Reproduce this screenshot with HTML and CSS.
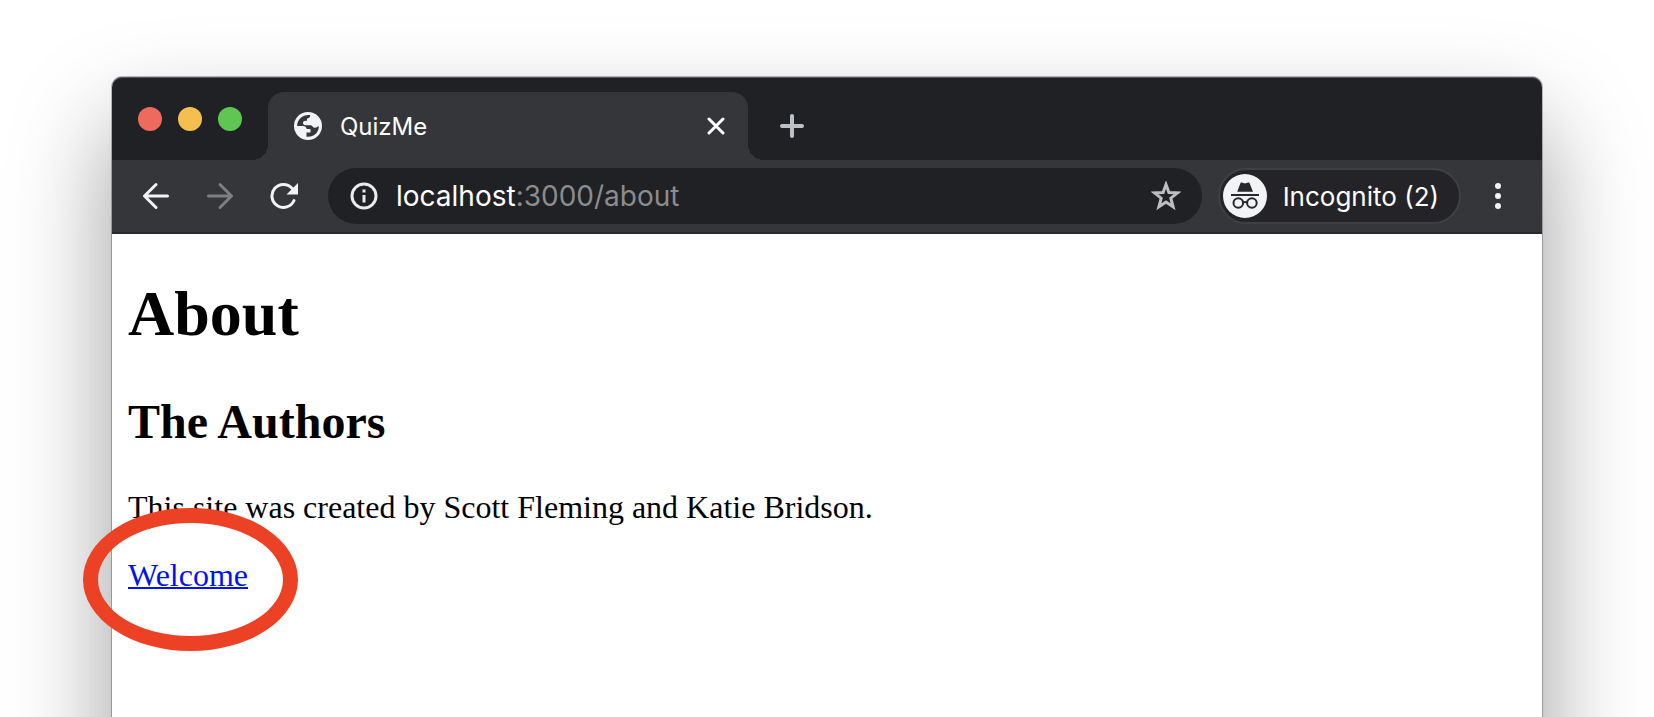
FILE: index.html
```html
<!DOCTYPE html>
<html lang="en">
<head>
<meta charset="utf-8">
<title>QuizMe</title>
<link rel="stylesheet" href="styles.css">
</head>
<body>
<div class="window">
  <header class="tabstrip">
    <div class="lights">
      <button class="light light-close" aria-label="Close window"></button>
      <button class="light light-min" aria-label="Minimize window"></button>
      <button class="light light-max" aria-label="Zoom window"></button>
    </div>
    <div class="tab">
      <svg class="globe" viewBox="0 0 28 28" aria-hidden="true">
        <circle cx="14" cy="14" r="14" fill="#f1f3f4"/>
        <path d="M16.300 3.200C9.500 2.200 3.200 7 3.100 14H9C11 14 12.300 15 12.700 17H16.500V20.500H12.500V24.700C19.500 25.500 25 20.500 24.800 14.200C23.500 14.200 23 15.800 21 15.800C18.500 15.800 18.500 13.300 16.500 13.300H11.500C10.300 13.300 9 12.300 9 11C9 9.500 10 8.800 11.500 8.800H13V6.500C14.500 6.500 16.300 5.500 16.300 3.200Z" fill="#35363a"/>
      </svg>
      <span class="tab-title">QuizMe</span>
      <button class="icon-button" aria-label="Close tab">
        <svg width="18" height="18" viewBox="0 0 18 18"><path d="M2 2L16 16M16 2L2 16" stroke="#fff" stroke-width="3" stroke-linecap="round"/></svg>
      </button>
    </div>
    <button class="icon-button new-tab" aria-label="New tab">
      <svg width="24" height="24" viewBox="0 0 24 24"><path d="M12 2V22M2 12H22" stroke="#bdc1c6" stroke-width="4" stroke-linecap="round"/></svg>
    </button>
  </header>

  <nav class="toolbar">
    <div class="nav-buttons">
      <button class="icon-button" aria-label="Back">
        <svg width="28" height="28" viewBox="0 0 28 28" fill="none" stroke="#f1f3f4" stroke-width="3" stroke-linecap="round" stroke-linejoin="round"><path d="M25.500 14H2.500M14 2.500L2.500 14L14 25.500"/></svg>
      </button>
      <button class="icon-button" aria-label="Forward" disabled>
        <svg width="28" height="28" viewBox="0 0 28 28" fill="none" stroke="#7e7f82" stroke-width="3" stroke-linecap="round" stroke-linejoin="round"><path d="M2.500 14H25.500M14 2.500L25.500 14L14 25.500"/></svg>
      </button>
      <button class="icon-button" aria-label="Reload">
        <svg width="28" height="28" viewBox="0 0 28 28"><path d="M24 18A11.500 11.500 0 1 1 22 5.700" transform="translate(0 .5)" fill="none" stroke="#f1f3f4" stroke-width="3" stroke-linecap="round"/><path d="M28 1V12.500H16.500Z" fill="#f1f3f4"/></svg>
      </button>
    </div>
    <div class="omnibox">
      <button class="icon-button" aria-label="View site information">
        <svg width="28" height="28" viewBox="0 0 28 28"><circle cx="14" cy="14" r="12" fill="none" stroke="#e8eaed" stroke-width="3"/><path d="M12.500 7.500H15.500V10.500H12.500ZM12.500 13H15.500V20.500H12.500Z" fill="#e8eaed"/></svg>
      </button>
      <div class="url" role="textbox" aria-label="Address" contenteditable="true" spellcheck="false"><span class="url-host">localhost</span>:3000/about</div>
      <button class="icon-button" aria-label="Bookmark this tab">
        <svg width="30" height="30" viewBox="0 0 30 30"><path d="M15 3.500L17.900 11.500L26.500 11.800L19.800 17.200L22.100 25.800L15 21L7.900 25.800L10.200 17.200L3.500 11.800L12.100 11.500Z" fill="none" stroke="#bdbec0" stroke-width="3"/></svg>
      </button>
    </div>
    <button class="profile">
      <svg class="avatar" viewBox="0 0 44 44" aria-hidden="true">
        <circle cx="22" cy="22" r="22" fill="#f1f3f4"/>
        <path d="M17.600 8.800Q18 8.300 18.800 8.600L22 9.400L25.200 8.600Q26 8.300 26.400 8.800L30 17.700H14.200Z" fill="#28282c"/>
        <path d="M8 21H36" stroke="#28282c" stroke-width="2"/>
        <g fill="none" stroke="#28282c" stroke-width="2"><circle cx="15.300" cy="29" r="4.800"/><circle cx="28.900" cy="29" r="4.800"/><path d="M20 28.500Q22 27.300 24.200 28.500"/></g>
      </svg>
      <span>Incognito (2)</span>
    </button>
    <button class="icon-button" aria-label="Menu">
      <svg width="6" height="28" viewBox="0 0 6 28" fill="#f1f3f4"><circle cx="3" cy="4" r="3"/><circle cx="3" cy="14" r="3"/><circle cx="3" cy="24" r="3"/></svg>
    </button>
  </nav>

  <main class="page">
    <h1>About</h1>
    <h2>The Authors</h2>
    <p>This site was created by Scott Fleming and Katie Bridson.</p>
    <p><span class="marked"><a href="#">Welcome</a><span class="ring"></span></span></p>
  </main>
</div>
</body>
</html>
```
FILE: styles.css
```css
* {
  box-sizing: border-box;
}

body {
  margin: 0;
  height: 100vh;
  overflow: hidden;
  background: #fff;
}

button {
  padding: 0;
  border: 0;
  background: none;
  font: inherit;
  color: inherit;
}

svg {
  display: block;
}

.window {
  margin: 77px 112px 0;
  min-height: 100vh;
  border-radius: 10px 10px 0 0;
  background: #fff;
  box-shadow: 0 0 0 1px rgba(0, 0, 0, 0.25), 0 50px 100px rgba(0, 0, 0, 0.4);
  font-family: Inter, "Liberation Sans", sans-serif;
  color: #fff;
}

.tabstrip {
  display: flex;
  align-items: flex-end;
  padding: 15px 26px 0;
  border-radius: 10px 10px 0 0;
  background: #202124;
  box-shadow: inset 0 1px #55575a;
}

.lights {
  display: flex;
  align-self: flex-start;
  gap: 16px;
  margin: 15px 26px 0 0;
}

.light {
  width: 24px;
  height: 24px;
  border-radius: 50%;
}

.light-close {
  background: #ed6a5e;
}

.light-min {
  background: #f5bf4f;
}

.light-max {
  background: #61c554;
}

.tab {
  position: relative;
  display: flex;
  flex: 0 1 480px;
  align-items: center;
  gap: 18px;
  height: 68px;
  padding: 0 23px 0 26px;
  border-radius: 16px 16px 0 0;
  background: #35363a;
  font-size: 24px;
}

.tab::before,
.tab::after {
  content: "";
  position: absolute;
  bottom: 0;
  width: 16px;
  height: 16px;
}

.tab::before {
  right: 100%;
  background: radial-gradient(circle at 0 0, #202124 16px, #35363a 16px);
}

.tab::after {
  left: 100%;
  background: radial-gradient(circle at 100% 0, #202124 16px, #35363a 16px);
}

.globe {
  width: 28px;
  height: 28px;
}

.tab-title {
  flex: 1;
}

.new-tab {
  align-self: center;
  margin-left: 32px;
}

.toolbar {
  display: flex;
  align-items: center;
  height: 74px;
  padding: 0 41px 0 30px;
  border-bottom: 2px solid #28292c;
  background: #35363a;
}

.nav-buttons {
  display: flex;
  gap: 36px;
  margin-right: 30px;
}

.omnibox {
  display: flex;
  flex: 1;
  align-items: center;
  gap: 18px;
  height: 56px;
  margin-right: 16px;
  padding: 0 21px 0 22px;
  border-radius: 28px;
  background: #202124;
}

.url {
  flex: 1;
  font-size: 28px;
  line-height: 36px;
  color: #8b8c8e;
}

.url-host {
  color: #fff;
}

.profile {
  display: flex;
  align-items: center;
  gap: 16px;
  height: 56px;
  margin-right: 34px;
  padding: 0 20px 0 3px;
  border: 2px solid #3f4044;
  border-radius: 28px;
  background: #242428;
  font-size: 26px;
}

.avatar {
  width: 44px;
  height: 44px;
}

.page {
  padding: 43px 16px 16px;
  font: 32px/37px "Liberation Serif", serif;
  color: #000;
}

h1 {
  margin: 0 0 44px;
  font-size: 64px;
  line-height: 74px;
}

h2 {
  margin: 0 0 40px;
  font-size: 48px;
  line-height: 54px;
}

p {
  margin: 0 0 31px;
}

a {
  color: #0014ee;
  text-decoration-thickness: 2px;
}

.marked {
  position: relative;
}

/* Hand-drawn style highlight laid over the link */
.ring {
  position: absolute;
  top: -49px;
  left: -45px;
  width: 215px;
  height: 143px;
  border: 15px solid #ec4125;
  border-radius: 50%;
  pointer-events: none;
}
```
